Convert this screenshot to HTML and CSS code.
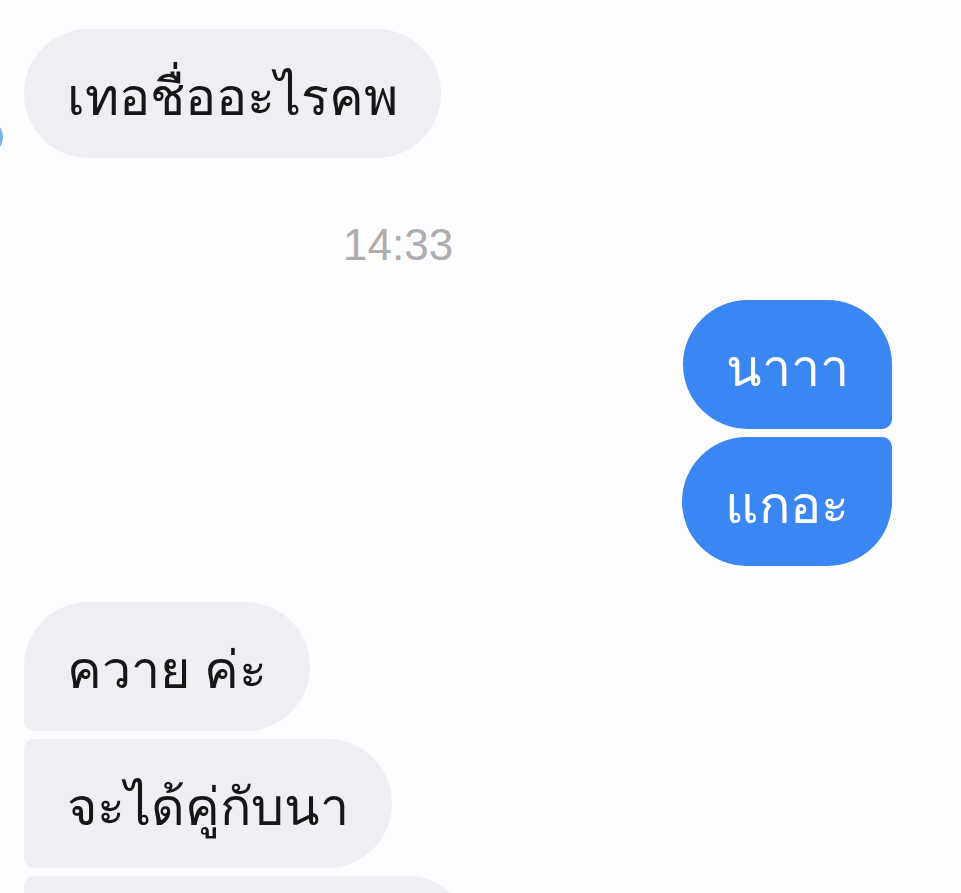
FILE: index.html
```html
<!DOCTYPE html>
<html lang="th">
<head>
<meta charset="utf-8">
<link rel="stylesheet" href="styles.css">
</head>
<body>
<div class="chat">
  <span class="edge-dot"></span>
  <div class="row in"><div class="bubble gray pill">เทอชื่ออะไรคพ</div></div>
  <div class="time">14:33</div>
  <div class="row out"><div class="bubble blue out-first">นาาา</div></div>
  <div class="row out"><div class="bubble blue out-last">แกอะ</div></div>
  <div class="row in"><div class="bubble gray in-first">ควาย ค่ะ</div></div>
  <div class="row in"><div class="bubble gray in-mid">จะได้คู่กับนา</div></div>
  <div class="row in"><div class="bubble gray in-mid wide"></div></div>
</div>
</body>
</html>
```
FILE: styles.css
```css
html, body {
  margin: 0;
  padding: 0;
  background: #fdfcfe;
  overflow: hidden;
}
.chat {
  position: relative;
  display: flex;
  flex-direction: column;
  padding-top: 29px;
  font-family: "Liberation Sans", sans-serif;
}
.edge-dot {
  position: absolute;
  left: -30px;
  top: 120px;
  width: 33px;
  height: 34px;
  border-radius: 50%;
  background: #78b4ea;
}
.row {
  display: flex;
  margin-bottom: 8px;
}
.row.in { padding-left: 24px; }
.row.out { justify-content: flex-end; padding-right: 69px; }
.bubble {
  box-sizing: border-box;
  height: 129px;
  display: flex;
  align-items: center;
  padding: 6px 43px 0 43px;
  font-size: 52px;
  line-height: 1;
  white-space: nowrap;
}
.gray { background: #efeef2; color: #161616; }
.blue { background: #3a86f2; color: #ffffff; }
.pill { border-radius: 65px; }
.out-first { border-radius: 65px 65px 10px 65px; }
.out-last { border-radius: 65px 10px 65px 65px; }
.in-first { border-radius: 65px 65px 65px 10px; }
.in-mid { border-radius: 10px 65px 65px 10px; }
.wide { width: 448px; }
.time {
  margin: 54px 0 30px 0;
  padding-left: 343px;
  height: 50px;
  line-height: 50px;
  font-size: 44px;
  color: #adadad;
}
.row.out + .row.in { margin-top: 28px; }
```
